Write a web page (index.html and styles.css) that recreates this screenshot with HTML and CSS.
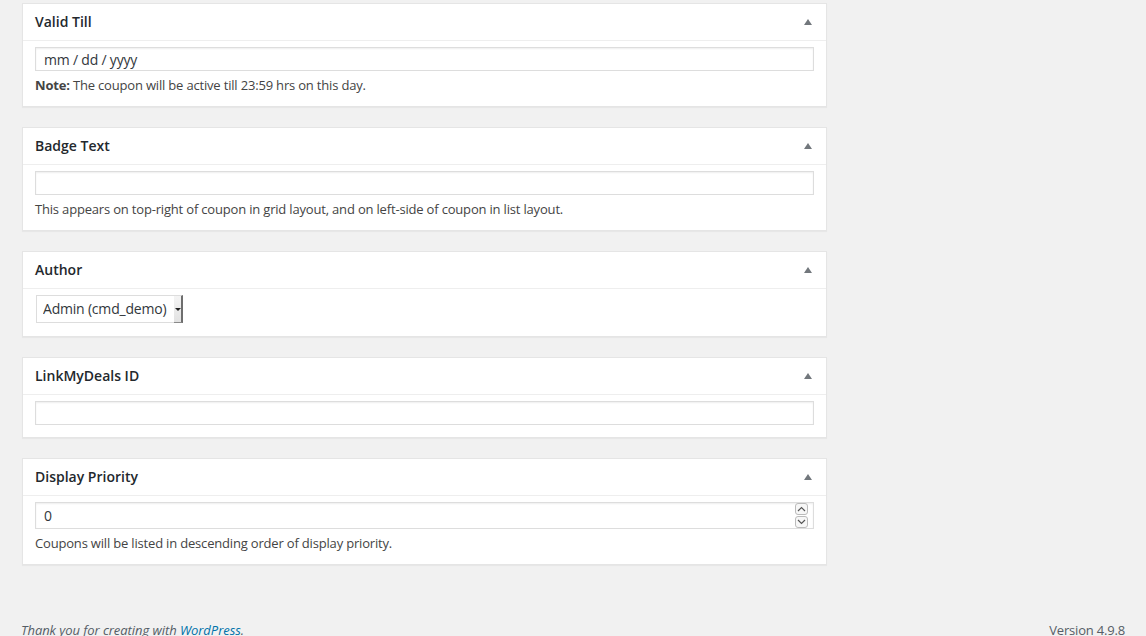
FILE: index.html
```html
<!DOCTYPE html>
<html lang="en">
<head>
<meta charset="utf-8">
<title>Coupon settings</title>
<link rel="stylesheet" href="styles.css">
</head>
<body>
<div class="wrap">
  <div class="boxes">
    <section class="postbox">
      <h2 class="hndle"><span>Valid Till</span><span class="toggle"></span></h2>
      <div class="inside">
        <input class="field" type="text" value="mm / dd / yyyy">
        <p class="desc"><strong>Note:</strong> The coupon will be active till 23:59 hrs on this day.</p>
      </div>
    </section>
    <section class="postbox">
      <h2 class="hndle"><span>Badge Text</span><span class="toggle"></span></h2>
      <div class="inside">
        <input class="field" type="text" value="">
        <p class="desc">This appears on top-right of coupon in grid layout, and on left-side of coupon in list layout.</p>
      </div>
    </section>
    <section class="postbox">
      <h2 class="hndle"><span>Author</span><span class="toggle"></span></h2>
      <div class="inside inside-select">
        <span class="select-wrap">
          <select class="select"><option>Admin (cmd_demo)</option></select>
          <span class="select-arrow"></span>
        </span>
      </div>
    </section>
    <section class="postbox">
      <h2 class="hndle"><span>LinkMyDeals ID</span><span class="toggle"></span></h2>
      <div class="inside">
        <input class="field" type="text" value="">
      </div>
    </section>
    <section class="postbox">
      <h2 class="hndle"><span>Display Priority</span><span class="toggle"></span></h2>
      <div class="inside">
        <span class="number-wrap">
          <input class="field field-number" type="text" value="0">
          <span class="spinner">
            <span class="spin"><svg width="9" height="6" viewBox="0 0 9 6"><path d="M1 5 L4.5 1.5 L8 5" fill="none" stroke="#555" stroke-width="1.2"/></svg></span>
            <span class="spin"><svg width="9" height="6" viewBox="0 0 9 6"><path d="M1 1 L4.5 4.5 L8 1" fill="none" stroke="#555" stroke-width="1.2"/></svg></span>
          </span>
        </span>
        <p class="desc">Coupons will be listed in descending order of display priority.</p>
      </div>
    </section>
  </div>
  <footer class="footer">
    <p class="thanks">Thank you for creating with <a href="#">WordPress</a>.</p>
    <p class="version">Version 4.9.8</p>
  </footer>
</div>
</body>
</html>
```
FILE: styles.css
```css
html, body {
  margin: 0;
  padding: 0;
  background: #f1f1f1;
  height: 100%;
  overflow: hidden;
}
body {
  font-family: "Open Sans", "Noto Sans", sans-serif;
  font-size: 13px;
  letter-spacing: -0.18px;
  color: #444;
}
.wrap {
  padding: 3px 0 0 22px;
}
.boxes {
  width: 805px;
  display: flex;
  flex-direction: column;
  gap: 20px;
}
.postbox {
  background: #fff;
  border: 1px solid #e5e5e5;
  box-shadow: 0 1px 1px rgba(0, 0, 0, 0.04);
}
.hndle {
  margin: 0;
  padding: 8px 12px;
  height: 20px;
  line-height: 20px;
  font-size: 14px;
  font-weight: 600;
  letter-spacing: 0;
  color: #23282d;
  border-bottom: 1px solid #eee;
  display: flex;
  justify-content: space-between;
  align-items: center;
}
.toggle {
  width: 0;
  height: 0;
  border-left: 4px solid transparent;
  border-right: 4px solid transparent;
  border-bottom: 6px solid #72777c;
  margin-right: 2px;
}
.inside {
  padding: 6px 12px 12px;
}
.inside-select {
  padding-bottom: 13px;
}
.field {
  display: block;
  box-sizing: border-box;
  width: 100%;
  height: 24px;
  margin: 0;
  padding: 2px 8px;
  border: 1px solid #ddd;
  box-shadow: inset 0 1px 2px rgba(0, 0, 0, 0.07);
  background: #fff;
  color: #32373c;
  font-family: inherit;
  font-size: 14px;
  letter-spacing: -0.2px;
  outline: none;
  border-radius: 0;
}
.desc {
  margin: 5px 0 0;
  line-height: 18px;
  font-size: 13px;
  color: #444;
}
.desc strong {
  font-weight: 700;
}
.select-wrap {
  position: relative;
  display: inline-block;
  margin-left: 1px;
  vertical-align: top;
}
.select {
  appearance: none;
  -webkit-appearance: none;
  box-sizing: border-box;
  display: block;
  width: 147px;
  height: 28px;
  margin: 0;
  padding: 0 12px 2px 6px;
  border: 1px solid #ddd;
  border-right: none;
  background: #fff;
  color: #32373c;
  font-family: inherit;
  font-size: 14px;
  letter-spacing: -0.2px;
  border-radius: 0;
  outline: none;
}
.select-arrow {
  position: absolute;
  right: 0;
  top: 0;
  width: 9px;
  height: 28px;
  box-sizing: border-box;
  background: linear-gradient(#f4f4f4, #e2e2e2);
  border-right: 2px solid #6e6e6e;
  border-bottom: 1px solid #8a8a8a;
  border-top: 1px solid #ddd;
}
.select-arrow::after {
  content: "";
  position: absolute;
  left: 1px;
  top: 12px;
  border-left: 3px solid transparent;
  border-right: 3px solid transparent;
  border-top: 3px solid #222;
}
.number-wrap {
  position: relative;
  display: block;
}
.field-number {
  height: 27px;
}
.spinner {
  position: absolute;
  right: 6px;
  top: 1px;
  display: flex;
  flex-direction: column;
  gap: 1px;
}
.spin {
  box-sizing: border-box;
  width: 13px;
  height: 12px;
  border: 1px solid #bbb;
  border-radius: 3px;
  background: #f7f7f7;
  display: flex;
  align-items: center;
  justify-content: center;
}
.spin svg {
  display: block;
}
.footer {
  display: flex;
  justify-content: space-between;
  align-items: flex-start;
  padding: 55px 20px 0 0;
  width: 1104px;
  margin-left: -1px;
  color: #555d66;
}
.footer p {
  margin: 0;
  line-height: 20px;
  font-size: 13px;
}
.thanks {
  font-style: italic;
  letter-spacing: -0.05px;
}
.thanks a {
  color: #0073aa;
  text-decoration: none;
}
```
